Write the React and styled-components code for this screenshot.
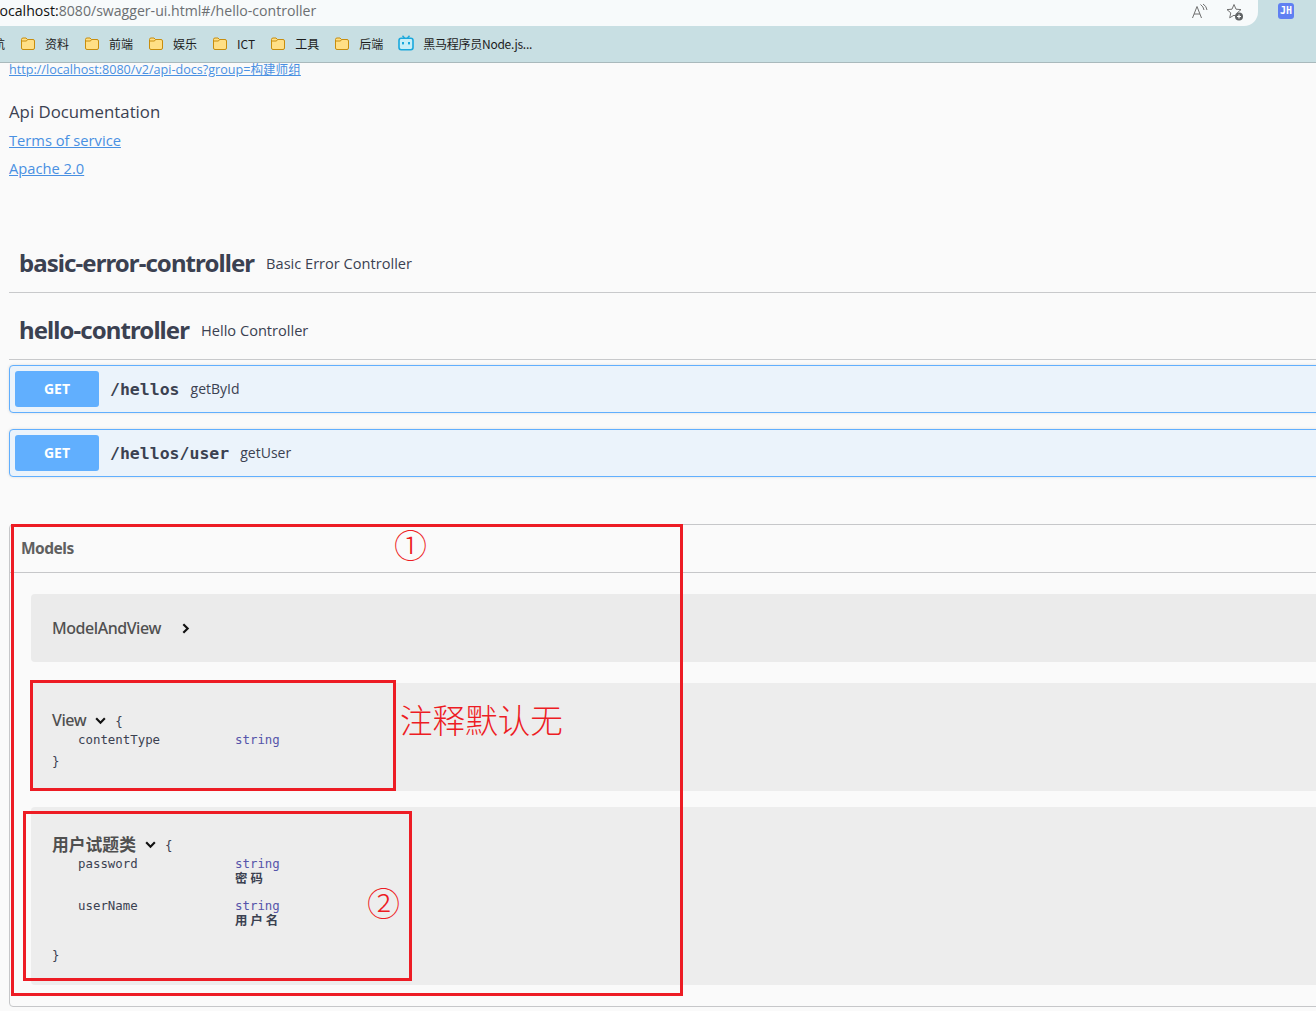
import React from 'react'
import styled, { createGlobalStyle } from 'styled-components'

const GlobalStyle = createGlobalStyle`
  html, body {
    margin: 0;
    padding: 0;
    background: #fafafa;
  }
`

const Page = styled.div`
  position: relative;
  width: 1316px;
  height: 1011px;
  overflow: hidden;
  background: #fafafa;
  font-family: "Open Sans", "Noto Sans CJK SC", sans-serif;
  color: #3b4151;
`

const BrowserTop = styled.div`
  background: #c8dfe3;
  border-bottom: 1px solid #a9b9bc;
  height: 62px;
`

const AddressRow = styled.div`
  display: flex;
  align-items: flex-start;
  height: 26px;
`

const AddressPill = styled.div`
  flex: 0 0 1258px;
  box-sizing: border-box;
  height: 26px;
  display: flex;
  align-items: center;
  background: #f7fafb;
  border-bottom-right-radius: 14px;
  padding-right: 14px;
`

const Url = styled.div`
  flex: 1;
  margin-left: -4px;
  font-size: 14.1px;
  white-space: nowrap;
  color: #6b6f72;
  margin-top: -5px;
  b {
    font-weight: 400;
    color: #111;
  }
`

const PillIcons = styled.div`
  display: flex;
  gap: 18px;
  align-items: center;
  margin-top: -3px;
`

const Avatar = styled.div`
  width: 16px;
  height: 16px;
  margin: 3px 0 0 20px;
  border-radius: 3px;
  background: #5f80f2;
  color: #fff;
  font: bold 10px/16px "DejaVu Sans Mono", monospace;
  text-align: center;
`

const Bookmarks = styled.div`
  box-sizing: border-box;
  display: flex;
  align-items: center;
  gap: 15px;
  height: 36px;
  padding-bottom: 2px;
  font-family: "Noto Sans CJK SC", sans-serif;
  font-size: 12px;
  color: #1c1c1c;
  margin-left: -7px;
`

const Bookmark = styled.div`
  display: flex;
  align-items: center;
  gap: 9px;
  white-space: nowrap;
  letter-spacing: ${p => p.$tight ? '-0.25px' : '0'};
`

const Wrapper = styled.div`
  width: 1500px;
  padding-left: 9px;
`

const ApiUrl = styled.a`
  display: block;
  height: 14px;
  line-height: 14px;
  font-size: 12.6px;
  color: #4990e2;
  text-decoration: underline;
  overflow: visible;
`

const InfoTitle = styled.div`
  margin-top: 23px;
  font-size: 16.8px;
  line-height: 24px;
`

const InfoLink = styled.a`
  display: block;
  margin-top: 5px;
  width: fit-content;
  font-size: 14.7px;
  line-height: 23px;
  color: #4990e2;
  text-decoration: underline;
`

const TagList = styled.div`
  margin-top: 46px;
`

const Tag = styled.div`
  box-sizing: border-box;
  height: 67px;
  display: flex;
  align-items: center;
  gap: 12px;
  padding: 7px 0 0 10px;
  border-bottom: 1px solid #c8c9cb;
`

const TagName = styled.span`
  font-family: "Noto Sans", sans-serif;
  font-size: 24px;
  font-weight: 700;
  letter-spacing: -0.93px;
  color: #3b4151;
`

const TagDesc = styled.span`
  font-size: 14.6px;
`

const Operation = styled.div`
  box-sizing: border-box;
  height: 48px;
  margin-top: ${p => p.$first ? '5px' : '16px'};
  display: flex;
  align-items: center;
  padding-left: 5px;
  background: #ebf3fb;
  border: 1px solid #61affe;
  border-radius: 4px;
  box-shadow: 0 0 3px rgba(0, 0, 0, 0.12);
`

const MethodBadge = styled.div`
  width: 84px;
  height: 36px;
  border-radius: 3px;
  background: #61affe;
  color: #fff;
  font-size: 14px;
  font-weight: 700;
  line-height: 36px;
  text-align: center;
`

const OpPath = styled.span`
  margin-left: 11px;
  font: bold 16.5px "DejaVu Sans Mono", monospace;
  color: #3b4151;
`

const OpSummary = styled.span`
  margin: -2px 0 0 11px;
  font-size: 14px;
  color: #3b4151;
`

const ModelsSection = styled.section`
  box-sizing: border-box;
  height: 483px;
  margin-top: 47px;
  border: 1px solid #c6c7c9;
  border-radius: 4px;
`

const ModelsHeader = styled.div`
  box-sizing: border-box;
  height: 48px;
  padding-left: 11px;
  border-bottom: 1px solid #c6c7c9;
  font-family: "Noto Sans", sans-serif;
  font-size: 15.5px;
  font-weight: 700;
  letter-spacing: -0.5px;
  line-height: 47px;
  color: #606060;
`

const ModelBox = styled.div`
  box-sizing: border-box;
  height: ${p => p.$height}px;
  margin: ${p => p.$gap}px 0 0 21px;
  padding: ${p => p.$pad}px 0 0 21px;
  background: ${p => p.$bg || '#ededed'};
  border-radius: 4px;
`

const ModelHead = styled.div`
  display: flex;
  align-items: center;
  height: 20px;
  font-family: "Noto Sans", "Noto Sans CJK SC", sans-serif;
  color: #505050;
  white-space: nowrap;
`

const ModelTitle = styled.span`
  font-size: ${p => p.$cjk ? '16.8px' : '16px'};
  font-weight: ${p => p.$cjk ? 700 : 500};
  letter-spacing: ${p => p.$cjk ? '0' : '-0.45px'};
`

const Chevron = styled.svg`
  width: 13px;
  height: 13px;
  flex: none;
  margin-left: ${p => p.$left}px;
  margin-top: 1px;
  fill: none;
  stroke: #111;
  stroke-width: 2;
`

const Mono = styled.span`
  font-family: "DejaVu Sans Mono", "Noto Sans CJK SC", monospace;
  font-size: 12.4px;
  font-weight: 400;
  color: #3b4151;
`

const Brace = styled(Mono)`
  margin-left: 8px;
  padding-top: 2px;
`

const PropRow = styled.div`
  display: grid;
  grid-template-columns: 157px 1fr;
  padding-left: 26px;
  margin-top: ${p => p.$top}px;
`

const PropType = styled.div`
  font-family: "DejaVu Sans Mono", monospace;
  font-size: 12.4px;
  line-height: 14px;
  color: #55a;
`

const PropName = styled(PropType)`
  color: #3b4151;
`

const PropDesc = styled.div`
  font-family: "Noto Sans CJK SC", sans-serif;
  font-size: 12.4px;
  font-weight: 700;
  letter-spacing: 3px;
  line-height: 14px;
  color: #3b4151;
`

const CloseBrace = styled(Mono)`
  display: block;
  line-height: 14px;
  margin-top: ${p => p.$top}px;
`

const RedBox = styled.div`
  position: absolute;
  box-sizing: border-box;
  left: ${p => p.$x}px;
  top: ${p => p.$y}px;
  width: ${p => p.$w}px;
  height: ${p => p.$h}px;
  border: 3px solid #ed1c24;
  pointer-events: none;
`

const RedNote = styled.div`
  position: absolute;
  left: ${p => p.$x}px;
  top: ${p => p.$y}px;
  font-family: "Liberation Serif", "Noto Sans CJK SC", serif;
  font-size: ${p => p.$size}px;
  font-weight: 300;
  line-height: 1;
  color: #ed1c24;
  white-space: nowrap;
`

const Folder = () => (
  <svg width="16" height="15" viewBox="0 0 16 15">
    <path d="M1.5 3.5 A1.5 1.5 0 0 1 3 2 H6 L7.5 3.5 H13 A1.5 1.5 0 0 1 14.5 5 V12 A1.5 1.5 0 0 1 13 13.5 H3 A1.5 1.5 0 0 1 1.5 12 Z" fill="#ffdf85" stroke="#c88d0d" strokeWidth="1" />
    <path d="M1.5 5 H6.5 L7.5 3.5" fill="none" stroke="#c88d0d" strokeWidth="1" />
  </svg>
)

const TvIcon = () => (
  <svg width="16" height="16" viewBox="0 0 16 16">
    <path d="M4.5 0.8 L6.5 3 M11.5 0.8 L9.5 3" stroke="#1aa8dc" strokeWidth="1.4" fill="none" />
    <rect x="1" y="3.2" width="14" height="11.5" rx="2.2" fill="#c8eef8" stroke="#1aa8dc" strokeWidth="1.6" />
    <rect x="4" y="7" width="2" height="2.4" fill="#1aa8dc" />
    <rect x="10" y="7" width="2" height="2.4" fill="#1aa8dc" />
  </svg>
)

const ReadAloud = () => (
  <svg width="17" height="17" viewBox="0 0 17 17" fill="none" stroke="#707070" strokeWidth="1">
    <path d="M1.5 15 L6 3.5 L10.5 15 M3 11 H9" />
    <path d="M9.5 1.5 Q12.5 3.5 13 7 M12 1 Q15.5 3 16 7" />
  </svg>
)

const StarAdd = () => (
  <svg width="18" height="18" viewBox="0 0 18 18">
    <path d="M8 1.5 L10 6.2 L15 6.6 L11.2 9.9 L12.3 14.8 L8 12.2 L3.7 14.8 L4.8 9.9 L1 6.6 L6 6.2 Z" fill="none" stroke="#707070" strokeWidth="1" />
    <circle cx="13" cy="13.5" r="4" fill="#5f6264" />
    <path d="M13 11.5 V15.5 M11 13.5 H15" stroke="#fff" strokeWidth="1.2" />
  </svg>
)

const ChevronRight = () => (
  <Chevron $left={18} viewBox="0 0 12 12"><path d="M4 2 L8 6 L4 10" /></Chevron>
)

const ChevronDown = () => (
  <Chevron $left={8} viewBox="0 0 12 12"><path d="M2 4 L6 8 L10 4" /></Chevron>
)

const bookmarks = ['航', '资料', '前端', '娱乐', 'ICT', '工具', '后端']

const App = () => (
  <Page>
    <GlobalStyle />
    <BrowserTop>
      <AddressRow>
        <AddressPill>
          <Url><b>localhost:</b>8080/swagger-ui.html#/hello-controller</Url>
          <PillIcons>
            <ReadAloud />
            <StarAdd />
          </PillIcons>
        </AddressPill>
        <Avatar>JH</Avatar>
      </AddressRow>
      <Bookmarks>
        {bookmarks.map((name, i) => (
          <Bookmark key={name}>
            {i > 0 && <Folder />}
            {name}
          </Bookmark>
        ))}
        <Bookmark $tight><TvIcon />黑马程序员Node.js...</Bookmark>
      </Bookmarks>
    </BrowserTop>

    <Wrapper>
      <ApiUrl>http://localhost:8080/v2/api-docs?group=构建师组</ApiUrl>
      <InfoTitle>Api Documentation</InfoTitle>
      <InfoLink>Terms of service</InfoLink>
      <InfoLink>Apache 2.0</InfoLink>

      <TagList>
        <Tag>
          <TagName>basic-error-controller</TagName>
          <TagDesc>Basic Error Controller</TagDesc>
        </Tag>
        <Tag>
          <TagName>hello-controller</TagName>
          <TagDesc>Hello Controller</TagDesc>
        </Tag>
      </TagList>

      <Operation $first>
        <MethodBadge>GET</MethodBadge>
        <OpPath>/hellos</OpPath>
        <OpSummary>getById</OpSummary>
      </Operation>
      <Operation>
        <MethodBadge>GET</MethodBadge>
        <OpPath>/hellos/user</OpPath>
        <OpSummary>getUser</OpSummary>
      </Operation>

      <ModelsSection>
        <ModelsHeader>Models</ModelsHeader>

        <ModelBox $height={68} $gap={21} $pad={24} $bg="#ebebeb">
          <ModelHead>
            <ModelTitle>ModelAndView</ModelTitle>
            <ChevronRight />
          </ModelHead>
        </ModelBox>

        <ModelBox $height={108} $gap={21} $pad={27}>
          <ModelHead>
            <ModelTitle>View</ModelTitle>
            <ChevronDown />
            <Brace>{'{'}</Brace>
          </ModelHead>
          <PropRow $top={3}>
            <PropName>contentType</PropName>
            <PropType>string</PropType>
          </PropRow>
          <CloseBrace $top={8}>{'}'}</CloseBrace>
        </ModelBox>

        <ModelBox $height={178} $gap={16} $pad={27}>
          <ModelHead>
            <ModelTitle $cjk>用户试题类</ModelTitle>
            <ChevronDown />
            <Brace>{'{'}</Brace>
          </ModelHead>
          <PropRow $top={3}>
            <PropName>password</PropName>
            <div>
              <PropType>string</PropType>
              <PropDesc>密码</PropDesc>
            </div>
          </PropRow>
          <PropRow $top={14}>
            <PropName>userName</PropName>
            <div>
              <PropType>string</PropType>
              <PropDesc>用户名</PropDesc>
            </div>
          </PropRow>
          <CloseBrace $top={22}>{'}'}</CloseBrace>
        </ModelBox>
      </ModelsSection>
    </Wrapper>

    <RedBox $x={11} $y={524} $w={672} $h={472} />
    <RedBox $x={30} $y={680} $w={366} $h={111} />
    <RedBox $x={23} $y={811} $w={389} $h={170} />
    <RedNote $x={394} $y={531} $size={33}>①</RedNote>
    <RedNote $x={367} $y={889} $size={33}>②</RedNote>
    <RedNote $x={400} $y={706} $size={32.6}>注释默认无</RedNote>
  </Page>
)

export default App
